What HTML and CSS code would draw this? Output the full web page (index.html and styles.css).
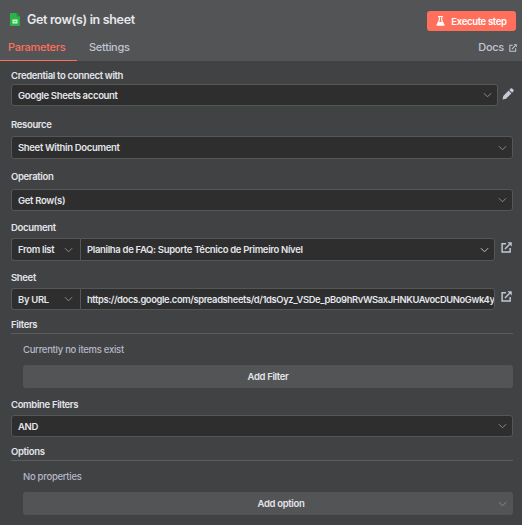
FILE: index.html
```html
<!DOCTYPE html>
<html lang="en">
<head>
<meta charset="utf-8">
<title>Get row(s) in sheet</title>
<link rel="stylesheet" href="styles.css">
</head>
<body>
<svg class="defs" aria-hidden="true">
  <symbol id="chevron" viewBox="0 0 10 6"><path d="M1 1l4 4 4-4" fill="none" stroke="currentColor" stroke-width="1.1"/></symbol>
  <symbol id="external" viewBox="0 0 12 12"><path d="M5.5 2H1.2v8.8H10V6.5M4.3 7.7l5.2-5.2" fill="none" stroke="currentColor" stroke-width="1.6"/><path d="M7 .3h4.7V5z" fill="currentColor"/></symbol>
</svg>
<div class="panel">
  <header class="header">
    <div class="title-row">
      <svg class="sheet-icon" viewBox="0 0 10 13"><path d="M1 0h5.6L10 3.4V12a1 1 0 0 1-1 1H1a1 1 0 0 1-1-1V1a1 1 0 0 1 1-1z" fill="#28b446"/><path d="M6.6 0L10 3.4H6.6z" fill="#1a8f35"/><path d="M2.5 6.5h5v4h-5z" fill="#dcf4e1"/><path d="M3.2 8.5h3.6M5 7.2v2.6" stroke="#58bd6d" stroke-width=".6"/></svg>
      <h1 class="title">Get row(s) in sheet</h1>
      <button class="execute"><svg class="flask" viewBox="0 0 9 10"><path d="M2 .5h5M3.3.5v3.8L1 9h7L5.7 4.3V.5" fill="none" stroke="currentColor" stroke-width="1.1"/><path d="M2.7 6h3.6l1.6 3.4H1.1z" fill="currentColor"/></svg><span>Execute step</span></button>
    </div>
    <nav class="tabs">
      <a class="tab active"><span>Parameters</span></a>
      <a class="tab settings"><span>Settings</span></a>
      <a class="docs"><span>Docs</span><svg class="docs-icon"><use href="#external"/></svg></a>
    </nav>
  </header>
  <main class="form">
    <section class="field credential">
      <label class="label">Credential to connect with</label>
      <div class="row">
        <div class="control"><span>Google Sheets account</span><svg class="chevron"><use href="#chevron"/></svg></div>
        <svg class="pencil" viewBox="0 0 12 12"><path d="M.5 11.5l.8-3.6L6.6 2.6l2.8 2.8-5.3 5.3zM7.3 1.9L8.7.6c.5-.5 1-.5 1.5 0l1.2 1.2c.5.5.5 1 0 1.5L10.1 4.7z" fill="currentColor"/></svg>
      </div>
    </section>
    <section class="field resource">
      <label class="label">Resource</label>
      <div class="control tall"><span>Sheet Within Document</span><svg class="chevron"><use href="#chevron"/></svg></div>
    </section>
    <section class="field operation">
      <label class="label">Operation</label>
      <div class="control"><span>Get Row(s)</span><svg class="chevron"><use href="#chevron"/></svg></div>
    </section>
    <section class="field document">
      <label class="label">Document</label>
      <div class="row">
        <div class="control tall mode"><span>From list</span><svg class="chevron"><use href="#chevron"/></svg></div>
        <div class="control tall value"><span>Planilha de FAQ: Suporte Técnico de Primeiro Nível</span><svg class="chevron bright"><use href="#chevron"/></svg></div>
        <svg class="external"><use href="#external"/></svg>
      </div>
    </section>
    <section class="field sheet">
      <label class="label">Sheet</label>
      <div class="row">
        <div class="control mode"><span>By URL</span><svg class="chevron"><use href="#chevron"/></svg></div>
        <div class="control value url"><span>https://docs.google.com/spreadsheets/d/1dsOyz_VSDe_pBo9hRvWSaxJHNKUAvocDUNoGwk4y</span></div>
        <svg class="external"><use href="#external"/></svg>
      </div>
    </section>
    <section class="group filters">
      <h2 class="group-title">Filters</h2>
      <p class="empty">Currently no items exist</p>
      <button class="add"><span>Add Filter</span></button>
    </section>
    <section class="field combine">
      <label class="label">Combine Filters</label>
      <div class="control"><span>AND</span><svg class="chevron"><use href="#chevron"/></svg></div>
    </section>
    <section class="group options">
      <h2 class="group-title">Options</h2>
      <p class="empty">No properties</p>
      <button class="add select"><span>Add option</span><svg class="chevron"><use href="#chevron"/></svg></button>
    </section>
  </main>
</div>
</body>
</html>
```
FILE: styles.css
```css
* { box-sizing: border-box; }
body { margin: 0; background: #414244; font-family: Inter, "Liberation Sans", sans-serif; font-size: 9.5px; font-weight: 560; letter-spacing: -0.33px; color: #e4e5eb; }
h1, h2, p { margin: 0; }
button { border: 0; font: inherit; letter-spacing: inherit; color: inherit; padding: 0; }
svg { display: block; flex: none; }
.defs { position: absolute; width: 0; height: 0; }
.panel { height: 525px; overflow: hidden; background: #414244; }
.header { height: 61px; background: #535456; }
.title-row { display: flex; align-items: center; height: 41px; padding: 0 6px 0 10px; }
.sheet-icon { width: 10px; height: 13px; margin-top: -2px; }
.title { font-size: 12.5px; font-weight: 600; margin-left: 7px; line-height: 16px; margin-top: -1px; color: #e7e8ec; }
.execute { display: flex; align-items: center; justify-content: center; gap: 6px; width: 89px; height: 20px; margin-left: auto; margin-top: 1px; border-radius: 3px; background: #ff6f5c; color: #fff; font-weight: 600; font-size: 9.5px; }
.execute span { padding-top: 1px; }
.flask { width: 9px; height: 10px; }
.tabs { display: flex; height: 20px; font-size: 11px; font-weight: 540; line-height: 13px; letter-spacing: -0.28px; color: #c0c4d2; }
.tab { height: 20px; }
.active { width: 77px; padding-left: 8px; color: #ff6f5c; border-bottom: 1px solid #ff6f5c; }
.settings { margin-left: 12px; }
.docs { display: flex; margin-left: auto; margin-right: 5px; gap: 5px; }
.docs-icon { width: 8px; height: 8px; margin-top: 3px; }
.form { padding: 7px 9px 0 11px; }
.label { display: block; height: 16px; line-height: 16px; }
.row { display: flex; }
.control { flex: 1; display: flex; align-items: center; justify-content: space-between; height: 22px; padding: 0 5px 0 6px; border: 1px solid #555756; border-radius: 3px; background: #2d2e2d; white-space: nowrap; }
.tall { height: 23px; }
.field > .control { width: 502px; }
.chevron { width: 9px; height: 6px; color: #8b8c92; }
.bright { color: #c3c5cc; }
.pencil { width: 12px; height: 12px; margin: 4px -1px 0 4px; color: #c7cad6; }
.resource { margin-top: 11px; }
.resource .label { height: 19px; }
.operation { margin-top: 10px; }
.operation .label { height: 20px; }
.document { margin-top: 9px; }
.document .label { height: 18px; }
.mode { flex: 0 0 69px; padding-right: 7px; border-right: 0; border-radius: 3px 0 0 3px; }
.value { border-radius: 0 3px 3px 0; overflow: hidden; }
.url { padding: 0 0 0 6px; font-size: 9.4px; letter-spacing: -0.38px; }
.external { width: 11px; height: 11px; margin: 4px 1px 0 6px; color: #c3c7d5; }
.sheet { margin-top: 9px; }
.sheet .label { height: 18px; }
.sheet .external { margin-top: 3px; }
.filters { margin-top: 7px; }
.group-title { font-size: 9.5px; font-weight: 600; height: 17px; line-height: 16px; border-bottom: 1px solid #5b5c5e; }
.empty { line-height: 16px; margin: 8px 0 0 12px; font-weight: 500; letter-spacing: -0.28px; color: #b5b8c7; }
.add { display: flex; align-items: center; justify-content: center; width: 490px; height: 23px; margin: 7px 0 0 12px; border-radius: 3px; background: #535456; }
.combine { margin-top: 9px; }
.combine .label { height: 18px; }
.options { margin-top: 7px; }
.select { padding: 0 6px; }
.select span { flex: 1; padding-left: 35px; }
```
